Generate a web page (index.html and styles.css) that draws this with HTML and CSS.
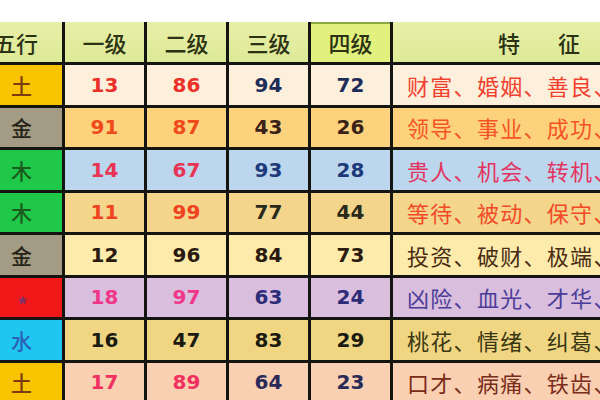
FILE: index.html
```html
<!DOCTYPE html>
<html lang="zh">
<head>
<meta charset="utf-8">
<title>五行等级表</title>
<link rel="stylesheet" href="styles.css">
</head>
<body>
<div class="page">
<table class="grid">
  <colgroup>
    <col class="c-el"><col class="c-n"><col class="c-n"><col class="c-n"><col class="c-n"><col class="c-txt">
  </colgroup>
  <thead>
    <tr>
      <th>五行</th><th>一级</th><th>二级</th><th>三级</th><th class="hl">四级</th>
      <th class="feat"><div class="feat-in"><span>特</span><span>征</span></div></th>
    </tr>
  </thead>
  <tbody>
    <tr class="r1">
      <td class="el tu">土</td><td class="a">13</td><td class="a">86</td><td class="b">94</td><td class="b">72</td><td class="t">财富、婚姻、善良、</td>
    </tr>
    <tr class="r2">
      <td class="el jin">金</td><td class="a">91</td><td class="a">87</td><td class="b">43</td><td class="b">26</td><td class="t">领导、事业、成功、</td>
    </tr>
    <tr class="r3">
      <td class="el mu">木</td><td class="a">14</td><td class="a">67</td><td class="b">93</td><td class="b">28</td><td class="t">贵人、机会、转机、</td>
    </tr>
    <tr class="r4">
      <td class="el mu">木</td><td class="a">11</td><td class="a">99</td><td class="b">77</td><td class="b">44</td><td class="t">等待、被动、保守、</td>
    </tr>
    <tr class="r5">
      <td class="el jin">金</td><td class="a">12</td><td class="a">96</td><td class="b">84</td><td class="b">73</td><td class="t">投资、破财、极端、</td>
    </tr>
    <tr class="r6">
      <td class="el huo"><span class="star">★</span></td><td class="a">18</td><td class="a">97</td><td class="b">63</td><td class="b">24</td><td class="t">凶险、血光、才华、</td>
    </tr>
    <tr class="r7">
      <td class="el shui">水</td><td class="a">16</td><td class="a">47</td><td class="b">83</td><td class="b">29</td><td class="t">桃花、情绪、纠葛、</td>
    </tr>
    <tr class="r8">
      <td class="el tu">土</td><td class="a">17</td><td class="a">89</td><td class="b">64</td><td class="b">23</td><td class="t">口才、病痛、铁齿、</td>
    </tr>
  </tbody>
</table>
</div>
</body>
</html>
```

FILE: styles.css
```css
html, body {
  margin: 0;
  padding: 0;
  background: #ffffff;
  overflow: hidden;
  width: 600px;
  height: 400px;
}

.page {
  padding-top: 22px;
  margin-left: -22px;
  width: 720px;
}

.grid {
  border-collapse: collapse;
  table-layout: fixed;
  width: 714px;
  font-family: "Noto Sans CJK SC", "Noto Sans", sans-serif;
}

.c-el { width: 84px; }
.c-n { width: 82px; }
.c-txt { width: 302px; }

.grid th,
.grid td {
  border: 3px solid #141410;
  padding: 0;
  white-space: nowrap;
  overflow: hidden;
}

.grid th {
  border-top: 0;
  height: 40px;
  background: linear-gradient(#e7efa8, #dde996);
  color: #2c3214;
  font-size: 22px;
  font-weight: 500;
  text-align: center;
  line-height: 40px;
}

.grid th:first-child { text-align: right; padding-right: 24px; }

.grid th.hl {
  background: #e2f07e;
  box-shadow: inset 0 2px 0 #8aa83c;
}

.grid th.feat { text-align: left; }

.feat-in {
  display: flex;
  gap: 38px;
  padding-left: 105px;
}

.grid td {
  height: 39.5px;
  text-align: center;
  font-family: "DejaVu Sans", "Liberation Sans", sans-serif;
  font-weight: 700;
  font-size: 20px;
}

.grid td.el {
  font-family: "Noto Sans CJK SC", sans-serif;
  font-weight: 500;
  font-size: 21px;
  text-align: right;
  padding-right: 30px;
}

.grid td.t {
  text-align: left;
  padding-left: 14px;
  font-family: "Noto Sans CJK SC", sans-serif;
  font-weight: 400;
  font-size: 22px;
  letter-spacing: 1.3px;
}

.el.tu { background: #f8c300; color: #7c3a10; }
.el.jin { background: #a39b83; color: #262418; }
.el.mu { background: #20c84a; color: #1a5a1c; }
.el.huo { background: #f01818; }
.el.shui { background: #1fc6f0; color: #2a62b8; }

.star {
  font-size: 11px;
  color: #80306a;
  position: relative;
  top: -2px;
  margin-right: 4px;
}

.r1 td { background: #fcf0dc; }
.r1 .a { color: #ea3028; }
.r1 .b { color: #1e2c58; }
.r1 .t { color: #f0402e; }

.r2 td { background: #fcd27c; }
.r2 .a { color: #f04a1a; }
.r2 .b { color: #3a2218; }
.r2 .t { color: #f65424; }

.r3 td { background: #bcd6ee; }
.r3 .a { color: #e83454; }
.r3 .b { color: #1c3a7a; }
.r3 .t { color: #e2345e; }

.r4 td { background: #f3d58c; }
.r4 .a { color: #f0421e; }
.r4 .b { color: #2a2a1a; }
.r4 .t { color: #f24a28; }

.r5 td { background: #fcebaa; }
.r5 .a, .r5 .b { color: #2a1a10; }
.r5 .t { color: #4a2c12; }

.r6 td { background: #d9bedd; }
.r6 .a { color: #f03688; }
.r6 .b { color: #2c2c78; }
.r6 .t { color: #4a3c98; }

.r7 td { background: #f0d682; }
.r7 .a, .r7 .b { color: #1a1a10; }
.r7 .t { color: #3a3812; }

.r8 td { background: #f9d0b2; }
.r8 .a { color: #f0305e; }
.r8 .b { color: #2a2a58; }
.r8 .t { color: #7a2c1a; }

.r1 .el.tu, .r8 .el.tu { background: #f8c300; }
.r2 .el.jin, .r5 .el.jin { background: #a39b83; }
.r3 .el.mu, .r4 .el.mu { background: #20c84a; }
.r6 .el.huo { background: #f01818; }
.r7 .el.shui { background: #1fc6f0; }
```
